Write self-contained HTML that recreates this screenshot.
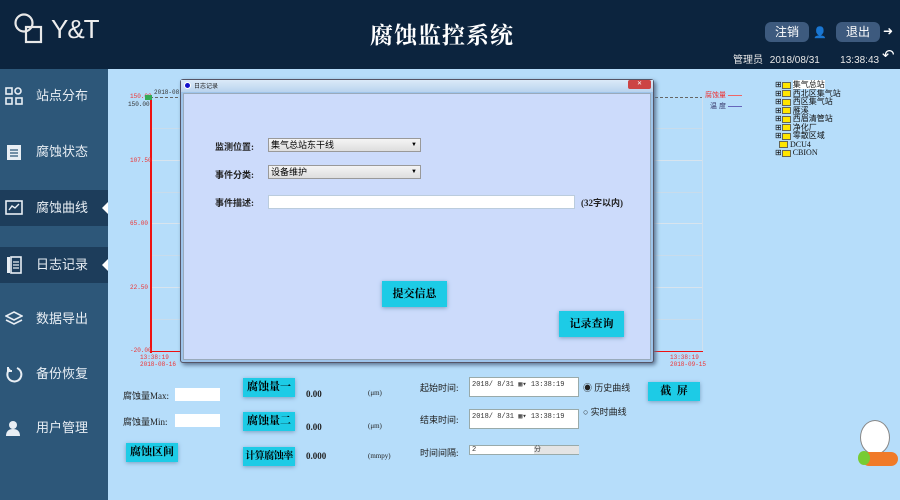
<!DOCTYPE html><html><head><meta charset="utf-8"><style>
*{margin:0;padding:0;box-sizing:border-box}
body{width:900px;height:500px;overflow:hidden;position:relative;background:#b6ddfa;font-family:"Liberation Sans","Noto Sans CJK SC",sans-serif}
.a{position:absolute}
.hd{left:0;top:0;width:900px;height:69px;background:#0c243e}
.sb{left:0;top:69px;width:108px;height:431px;background:#2d5779}
.it{left:0;width:108px;height:36px;color:#e8eef4;font-size:13px;line-height:36px}
.it span{position:absolute;left:36px}
.it.on{background:#1d3d5b}
.it.on:after{content:"";position:absolute;right:0;top:12px;border:6px solid transparent;border-right-color:#fff;border-left:0}
.ic{position:absolute;left:5px;top:9px;width:18px;height:18px}
.gl{height:1px;background:#d8e4ee;left:150px;width:553px}
.gm{height:1px;background:#c8dcec;left:150px;width:553px}
.tl{font-family:"Liberation Mono",monospace;font-size:6px;color:#e33}
.btn{background:#1dcbe6;color:#000;font-weight:bold;font-size:11px;text-align:center;box-shadow:0 1px 4px #7a9ec0;font-family:"Liberation Serif","Noto Serif CJK SC",serif;white-space:nowrap}
.lb{font-size:9px;color:#222;font-family:"Liberation Serif","Noto Sans CJK SC",serif;white-space:nowrap}
.dt{background:#fff;border:1px solid #9aa;font-size:7px;font-family:"Liberation Mono",monospace;color:#333;line-height:14px;padding-left:2px;white-space:nowrap}
.fd{width:9px;height:7px;background:#ffe600;border:1px solid #665;display:inline-block;vertical-align:middle;margin-right:2px}
.tr{font-size:8px;line-height:8.5px;color:#111;font-family:"Liberation Serif","Noto Sans CJK SC",serif}
</style></head><body>
<div class="a hd"></div>
<svg class="a" style="left:13px;top:12px" width="34" height="34" viewBox="0 0 34 34"><circle cx="11" cy="11" r="8.5" fill="none" stroke="#e8e8e8" stroke-width="2.2"/><rect x="13" y="15" width="15" height="15" fill="none" stroke="#e8e8e8" stroke-width="2.2"/></svg>
<div class="a" style="left:51px;top:15px;color:#eee;font-size:26px;letter-spacing:-1px;line-height:28px">Y&amp;T</div>
<div class="a" style="left:370px;top:19px;color:#fff;font-size:23px;font-weight:bold;font-family:'Noto Serif CJK SC','Liberation Serif',serif;letter-spacing:1px;line-height:30px">腐蚀监控系统</div>
<div class="a" style="left:765px;top:22px;width:44px;height:20px;border-radius:6px;background:#3d5a7e;color:#fff;font-size:12px;text-align:center;line-height:20px">注销</div>
<div class="a" style="left:813px;top:26px;color:#fff;font-size:11px">👤</div>
<div class="a" style="left:836px;top:22px;width:44px;height:20px;border-radius:6px;background:#3d5a7e;color:#fff;font-size:12px;text-align:center;line-height:20px">退出</div>
<div class="a" style="left:883px;top:24px;color:#fff;font-size:12px">➜</div>
<div class="a" style="left:733px;top:51px;color:#e8e8e8;font-size:10px;word-spacing:4px">管理员 2018/08/31 &nbsp; 13:38:43</div>
<div class="a" style="left:882px;top:46px;color:#fff;font-size:15px">↶</div>
<div class="a sb"></div>
<div class="a it" style="top:78px"><svg class="ic" viewBox="0 0 18 18" fill="none" stroke="#e8eef4" stroke-width="1.6"><rect x="1" y="1" width="6" height="6"/><circle cx="13" cy="4" r="3"/><rect x="1" y="11" width="6" height="6"/><rect x="11" y="11" width="6" height="6"/></svg><span>站点分布</span></div>
<div class="a it" style="top:134px"><svg class="ic" viewBox="0 0 18 18"><rect x="2" y="2" width="14" height="15" fill="#e8eef4"/><path d="M5 7h8M5 10h8M5 13h8" stroke="#2d5779" stroke-width="1.3"/></svg><span>腐蚀状态</span></div>
<div class="a it on" style="top:190px"><svg class="ic" viewBox="0 0 18 18"><rect x="1" y="2" width="16" height="13" fill="none" stroke="#e8eef4" stroke-width="1.6"/><path d="M4 11l3-4 3 2 4-4" fill="none" stroke="#e8eef4" stroke-width="1.4"/></svg><span>腐蚀曲线</span></div>
<div class="a it on" style="top:247px"><svg class="ic" viewBox="0 0 18 18"><rect x="2" y="1" width="3" height="16" fill="#e8eef4"/><rect x="6" y="1" width="10" height="16" fill="none" stroke="#e8eef4" stroke-width="1.6"/><path d="M8 6h6M8 9h6M8 12h6" stroke="#e8eef4" stroke-width="1.2"/></svg><span>日志记录</span></div>
<div class="a it" style="top:301px"><svg class="ic" viewBox="0 0 18 18" fill="none" stroke="#e8eef4" stroke-width="1.6"><path d="M9 2l8 4-8 4-8-4z"/><path d="M1 10l8 4 8-4"/></svg><span>数据导出</span></div>
<div class="a it" style="top:356px"><svg class="ic" viewBox="0 0 18 18" fill="none" stroke="#e8eef4" stroke-width="2"><path d="M5 4a7 7 0 1 0 7-1"/><path d="M3 2v4h4"/></svg><span>备份恢复</span></div>
<div class="a it" style="top:410px"><svg class="ic" viewBox="0 0 18 18" fill="#e8eef4"><circle cx="8" cy="6" r="4"/><path d="M1 17c0-5 3-7 7-7s7 2 7 7z"/></svg><span>用户管理</span></div>

<!-- chart -->
<div class="a gl" style="top:97px;border-top:1px dashed #666;background:none"></div>
<div class="a gm" style="top:128px"></div><div class="a gl" style="top:160px"></div><div class="a gm" style="top:192px"></div><div class="a gl" style="top:223px"></div><div class="a gm" style="top:255px"></div><div class="a gl" style="top:287px"></div><div class="a gm" style="top:319px"></div>
<div class="a" style="left:702px;top:97px;width:1px;height:255px;background:#d0e0ee"></div>
<div class="a" style="left:150px;top:95px;width:2px;height:258px;background:#e11"></div>
<div class="a" style="left:150px;top:351px;width:553px;height:1px;background:#e11"></div>
<div class="a tl" style="left:130px;top:93px">150.00</div>
<div class="a tl" style="left:128px;top:101px;color:#333">150.00</div>
<div class="a tl" style="left:130px;top:157px">107.50</div>
<div class="a tl" style="left:130px;top:220px">65.00</div>
<div class="a tl" style="left:130px;top:284px">22.50</div>
<div class="a tl" style="left:130px;top:347px">-20.00</div>
<div class="a tl" style="left:140px;top:354px">13:38:19<br>2018-08-16</div>
<div class="a tl" style="left:670px;top:354px">13:38:19<br>2018-09-15</div>
<div class="a tl" style="left:154px;top:89px;color:#333">2018-08-1</div>
<div class="a" style="left:145px;top:95px;width:7px;height:5px;background:#3a5"></div>
<div class="a" style="left:705px;top:90px;font-size:7px;color:#e33">腐蚀量 <span style="display:inline-block;width:14px;border-top:1px solid #e66;vertical-align:middle"></span></div>
<div class="a" style="left:710px;top:101px;font-size:7px;color:#336">温 度 <span style="display:inline-block;width:14px;border-top:1px solid #66b;vertical-align:middle"></span></div>
<div class="a tr" style="left:775px;top:81px">
<div>⊞<span class="fd"></span><span style="background:#fff">集气总站</span></div><div>⊞<span class="fd"></span>西北区集气站</div><div>⊞<span class="fd"></span>西区集气站</div><div>⊞<span class="fd"></span>雁溪</div><div>⊞<span class="fd"></span>西眉清管站</div><div>⊞<span class="fd"></span>净化厂</div><div>⊞<span class="fd"></span>零散区域</div><div>&nbsp;&nbsp;<span class="fd"></span>DCU4</div><div>⊞<span class="fd"></span>CBION</div></div>

<!-- dialog -->
<div class="a" style="left:180px;top:79px;width:474px;height:284px;border:1px solid #556;background:#9ec4ea;box-shadow:2px 2px 4px #5a7390;border-radius:3px"></div>
<div class="a" style="left:181px;top:80px;width:472px;height:12px;background:linear-gradient(#dbeaf8,#b9d3ee)"></div>
<div class="a" style="left:184px;top:82px;width:7px;height:7px;border-radius:50%;background:#11c;border:1px solid #fff"></div>
<div class="a" style="left:194px;top:81px;font-size:6px;color:#222">日志记录</div>
<div class="a" style="left:628px;top:80px;width:23px;height:9px;background:#c44;border-radius:2px;color:#fff;font-size:6px;text-align:center;line-height:9px">✕</div>
<div class="a" style="left:183px;top:93px;width:468px;height:267px;background:#ccdbfb;border:1px solid #9ab"></div>
<div class="a lb" style="left:215px;top:140px;font-size:9px;font-weight:bold">监测位置:</div>
<div class="a" style="left:268px;top:138px;width:153px;height:14px;background:linear-gradient(#f4f4f4,#dedede);border:1px solid #999;font-size:9px;line-height:12px;padding-left:2px">集气总站东干线<span style="position:absolute;right:3px;font-size:6px">▼</span></div>
<div class="a lb" style="left:215px;top:168px;font-weight:bold">事件分类:</div>
<div class="a" style="left:268px;top:165px;width:153px;height:14px;background:linear-gradient(#f4f4f4,#dedede);border:1px solid #999;font-size:9px;line-height:12px;padding-left:2px">设备维护<span style="position:absolute;right:3px;font-size:6px">▼</span></div>
<div class="a lb" style="left:215px;top:196px;font-weight:bold">事件描述:</div>
<div class="a" style="left:268px;top:195px;width:307px;height:14px;background:#fff;border:1px solid #bcd"></div>
<div class="a lb" style="left:581px;top:196px;font-weight:bold">(32字以内)</div>
<div class="a btn" style="left:382px;top:281px;width:65px;height:26px;line-height:26px">提交信息</div>
<div class="a btn" style="left:559px;top:311px;width:65px;height:26px;line-height:26px">记录查询</div>

<!-- bottom -->
<div class="a lb" style="left:123px;top:389px">腐蚀量Max:</div>
<div class="a" style="left:175px;top:388px;width:45px;height:13px;background:#fff"></div>
<div class="a lb" style="left:123px;top:415px">腐蚀量Min:</div>
<div class="a" style="left:175px;top:414px;width:45px;height:13px;background:#fff"></div>
<div class="a btn" style="left:126px;top:443px;width:52px;height:19px;line-height:19px">腐蚀区间</div>
<div class="a btn" style="left:243px;top:378px;width:52px;height:19px;line-height:19px">腐蚀量一</div>
<div class="a btn" style="left:243px;top:412px;width:52px;height:19px;line-height:19px">腐蚀量二</div>
<div class="a btn" style="left:243px;top:447px;width:52px;height:19px;line-height:19px;font-size:10px;letter-spacing:-0.5px">计算腐蚀率</div>
<div class="a lb" style="left:306px;top:389px;font-weight:bold;font-size:9px">0.00</div>
<div class="a lb" style="left:306px;top:422px;font-weight:bold">0.00</div>
<div class="a lb" style="left:306px;top:451px;font-weight:bold">0.000</div>
<div class="a lb" style="left:368px;top:389px;font-size:7px">(μm)</div>
<div class="a lb" style="left:368px;top:422px;font-size:7px">(μm)</div>
<div class="a lb" style="left:368px;top:452px;font-size:7px">(mmpy)</div>
<div class="a lb" style="left:420px;top:381px">起始时间:</div>
<div class="a dt" style="left:469px;top:377px;width:110px;height:20px">2018/ 8/31 ▦▾ 13:38:19</div>
<div class="a lb" style="left:420px;top:413px">结束时间:</div>
<div class="a dt" style="left:469px;top:409px;width:110px;height:20px">2018/ 8/31 ▦▾ 13:38:19</div>
<div class="a lb" style="left:420px;top:446px">时间间隔:</div>
<div class="a dt" style="left:469px;top:445px;width:110px;height:10px;line-height:8px">2<span style="position:absolute;left:64px;top:0;width:45px;background:#e4e4e4;height:8px">分</span></div>
<div class="a lb" style="left:583px;top:381px;font-size:9px">◉ 历史曲线</div>
<div class="a lb" style="left:583px;top:405px;font-size:9px">○ 实时曲线</div>
<div class="a btn" style="left:648px;top:382px;width:52px;height:19px;line-height:19px">截 &nbsp;屏</div>
<div class="a" style="left:860px;top:420px;width:30px;height:35px;border-radius:50%;background:#fff;border:1px solid #888"></div>
<div class="a" style="left:862px;top:452px;width:36px;height:14px;border-radius:7px;background:#f07a28"></div>
<div class="a" style="left:858px;top:451px;width:12px;height:14px;border-radius:50%;background:#7c3"></div>
</body></html>
